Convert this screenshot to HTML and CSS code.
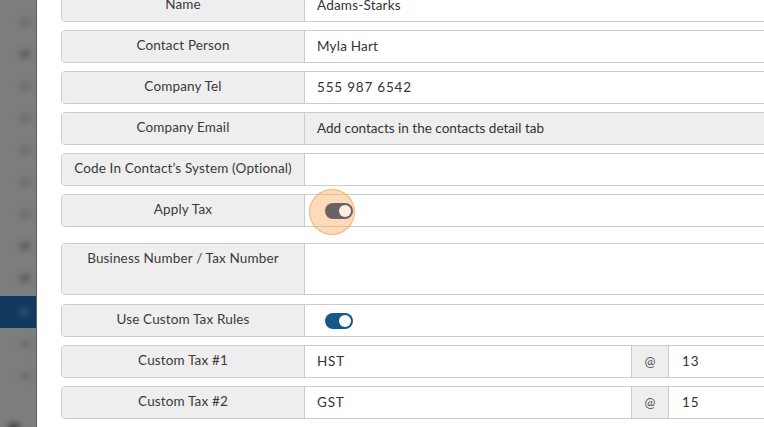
FILE: index.html
```html
<!DOCTYPE html>
<html>
<head>
<meta charset="utf-8">
<link rel="stylesheet" href="styles.css">
</head>
<body>
<div class="app">
  <aside class="sidebar">
    <div class="nav-item"><span class="dot"></span></div>
    <div class="nav-item"><span class="dot dark"></span></div>
    <div class="nav-item"><span class="dot"></span></div>
    <div class="nav-item"><span class="dot"></span></div>
    <div class="nav-item"><span class="dot"></span></div>
    <div class="nav-item"><span class="dot"></span></div>
    <div class="nav-item"><span class="dot"></span></div>
    <div class="nav-item"><span class="dot dark"></span></div>
    <div class="nav-item"><span class="dot dark"></span></div>
    <div class="nav-item active"><span class="dot"></span></div>
    <div class="nav-item"><span class="dot"></span></div>
    <div class="nav-item"><span class="dot"></span></div>
    <div class="nav-item icon"><span class="dot dark big"></span></div>
  </aside>
  <main class="content">
    <div class="form">
      <div class="row first">
        <div class="label">Name</div>
        <div class="value">Adams-Starks</div>
      </div>
      <div class="row">
        <div class="label">Contact Person</div>
        <div class="value">Myla Hart</div>
      </div>
      <div class="row">
        <div class="label">Company Tel</div>
        <div class="value tel">555 987 6542</div>
      </div>
      <div class="row">
        <div class="label">Company Email</div>
        <div class="value disabled">Add contacts in the contacts detail tab</div>
      </div>
      <div class="row">
        <div class="label">Code In Contact’s System (Optional)</div>
        <div class="value"></div>
      </div>
      <div class="row">
        <div class="label">Apply Tax</div>
        <div class="value">
          <span class="toggle-wrap">
            <span class="highlight"></span>
            <span class="toggle gray"><span class="knob"></span></span>
          </span>
        </div>
      </div>
      <div class="row tall">
        <div class="label top">Business Number / Tax Number</div>
        <div class="value"></div>
      </div>
      <div class="row">
        <div class="label">Use Custom Tax Rules</div>
        <div class="value">
          <span class="toggle blue"><span class="knob"></span></span>
        </div>
      </div>
      <div class="row">
        <div class="label">Custom Tax #1</div>
        <div class="value grow tel">HST</div>
        <div class="addon">@</div>
        <div class="value rate tel">13</div>
      </div>
      <div class="row">
        <div class="label">Custom Tax #2</div>
        <div class="value grow tel">GST</div>
        <div class="addon">@</div>
        <div class="value rate tel">15</div>
      </div>
    </div>
  </main>
</div>
</body>
</html>
```
FILE: styles.css
```css
html, body {
  margin: 0;
  padding: 0;
  height: 100%;
  overflow: hidden;
  background: #ffffff;
  font-family: "Lato", "Open Sans", sans-serif;
  color: #333333;
}

.app {
  display: flex;
  height: 427px;
  width: 764px;
  overflow: hidden;
}

.sidebar {
  width: 36px;
  flex: 0 0 36px;
  background: #7c7d7f;
  border-right: 1px solid #5c5d5f;
  display: flex;
  flex-direction: column;
  padding-top: 6px;
  overflow: hidden;
}

.nav-item {
  height: 32px;
  flex: 0 0 32px;
  display: flex;
  align-items: center;
  justify-content: flex-end;
  padding-right: 6px;
}

.nav-item.active {
  background: #123a5f;
  margin-top: 2px;
}

.nav-item.icon {
  justify-content: flex-start;
  padding-left: 8px;
  margin-top: 20px;
}

.dot {
  display: block;
  width: 10px;
  height: 6px;
  border-radius: 3px;
  background: #66676a;
  filter: blur(3px);
}

.dot.dark {
  background: #4f5052;
}

.dot.big {
  width: 12px;
  height: 12px;
  border-radius: 6px;
  background: #444547;
}

.nav-item.active .dot {
  background: #3a5878;
}

.content {
  flex: 1;
  padding-left: 24px;
  overflow: hidden;
}

.form {
  display: flex;
  flex-direction: column;
  gap: 8px;
  width: 760px;
}

.row {
  display: flex;
  height: 33px;
  box-sizing: border-box;
  border: 1px solid #cccccc;
  border-radius: 4px;
  overflow: visible;
  font-size: 13.5px;
}

.row.first {
  margin-top: -11px;
}

.row.tall {
  height: 52px;
  margin-top: 8px;
  margin-bottom: 1px;
}

.label {
  width: 243px;
  flex: 0 0 243px;
  box-sizing: border-box;
  background: #eeeeee;
  border-right: 1px solid #cccccc;
  border-radius: 3px 0 0 3px;
  display: flex;
  align-items: center;
  justify-content: center;
  padding-bottom: 3px;
  color: #3a3a3a;
  letter-spacing: 0.15px;
}

.label.top {
  align-items: flex-start;
  padding-top: 6px;
  padding-bottom: 0;
}

.value {
  flex: 1;
  display: flex;
  align-items: center;
  padding-left: 12px;
  padding-bottom: 2px;
  color: #333333;
  font-size: 13.5px;
  letter-spacing: 0.2px;
}

.value.tel {
  letter-spacing: 0.8px;
}

.value.disabled {
  background: #eeeeee;
  font-size: 13.5px;
  letter-spacing: 0;
}

.value.grow {
  flex: 0 0 314px;
}

.addon {
  width: 38px;
  flex: 0 0 38px;
  box-sizing: border-box;
  background: #eeeeee;
  border-left: 1px solid #cccccc;
  border-right: 1px solid #cccccc;
  display: flex;
  align-items: center;
  justify-content: center;
  padding-bottom: 2px;
  color: #555555;
  font-size: 13px;
}

.value.rate {
  padding-left: 13px;
}

.toggle-wrap {
  position: relative;
  display: inline-flex;
  margin-left: 8px;
  margin-top: 2px;
}

.highlight {
  position: absolute;
  left: -16px;
  top: -14px;
  width: 46px;
  height: 46px;
  box-sizing: border-box;
  border-radius: 50%;
  background: rgba(250, 172, 100, 0.45);
  border: 1.5px solid rgba(247, 160, 80, 0.75);
}

.toggle {
  position: relative;
  display: inline-flex;
  align-items: center;
  justify-content: flex-end;
  width: 28px;
  height: 16px;
  box-sizing: border-box;
  border-radius: 8px;
  padding-right: 2px;
}

.value > .toggle {
  margin-left: 8px;
  margin-top: 2px;
}

.toggle.gray {
  background: #6b6265;
}

.toggle.blue {
  background: #16578e;
}

.knob {
  width: 12px;
  height: 12px;
  border-radius: 50%;
  background: #ffffff;
}

.toggle.gray .knob {
  background: #fbeee3;
}
```
